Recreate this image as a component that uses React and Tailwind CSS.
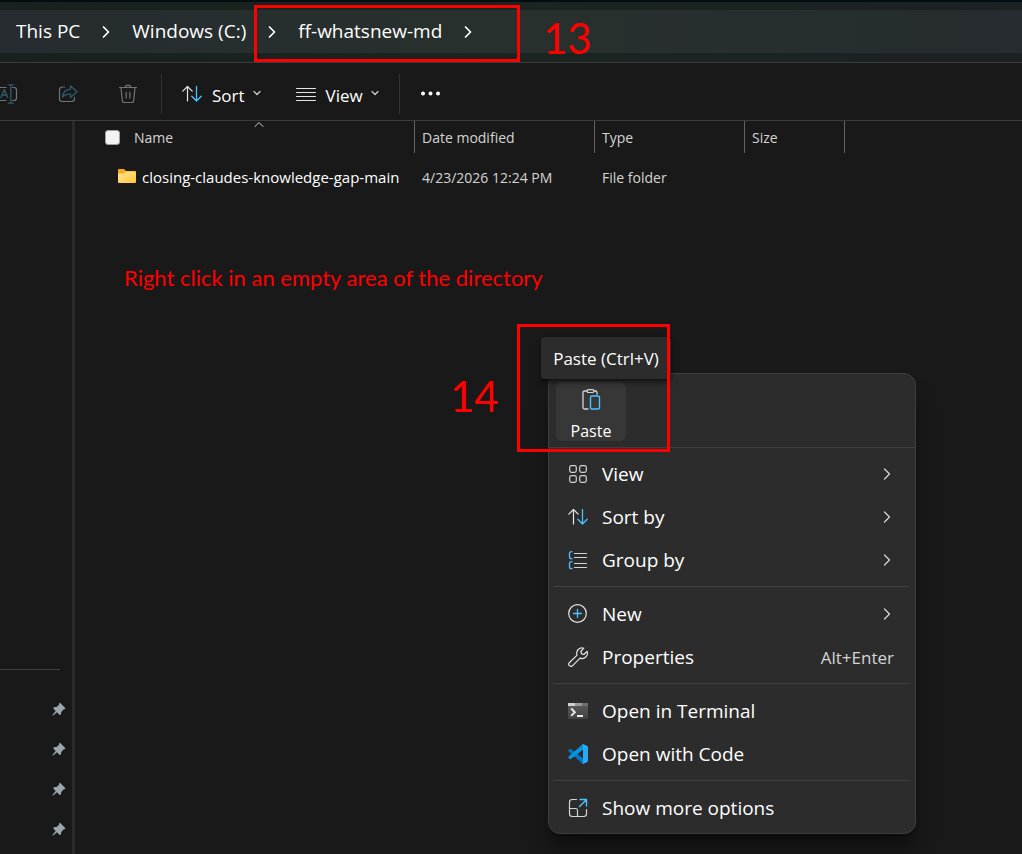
import { Fragment } from 'react';

const BLUE = '#4cc2ff';

function Icon({ size = 20, className = '', children }) {
  return (
    <svg
      width={size}
      height={size}
      viewBox={`0 0 ${size} ${size}`}
      fill="none"
      stroke="currentColor"
      strokeLinecap="round"
      strokeLinejoin="round"
      className={`shrink-0 ${className}`}
      aria-hidden="true"
    >
      {children}
    </svg>
  );
}

function ChevronRight({ className = '', width = 1.3 }) {
  return (
    <Icon size={14} className={className}>
      <path d="M4.500 2 9.500 7l-5 5" strokeWidth={width} />
    </Icon>
  );
}

function ChevronDown() {
  return (
    <Icon size={8} className="-ml-0.5 mb-0.5 text-neutral-300">
      <path d="M1 2.500 4 5.500l3-3" strokeWidth="1.2" />
    </Icon>
  );
}

function SortIcon() {
  return (
    <Icon className="text-neutral-200">
      <path d="M5.500 17V2.500M.8 7.200l4.700-4.700 4.700 4.700" strokeWidth="1.2" />
      <path d="M14.500 2.500V17M9.800 12.300l4.700 4.700 4.700-4.700" stroke={BLUE} strokeWidth="1.3" />
    </Icon>
  );
}

function RenameIcon() {
  return (
    <Icon className="text-neutral-500">
      <path d="M-2 3.500H8M-2 16.500H8M14.500 3.500h1.500a2.500 2.500 0 0 1 2.500 2.500v8a2.500 2.500 0 0 1-2.500 2.500h-1.500" strokeWidth="1.200" />
      <path d="M2.800 13.500 6.300 5.800l3.500 7.700M4 11h4.700" stroke="#315a70" strokeWidth="1.300" />
      <path d="M10.300.8h5M10.300 19.200h5M12.800.8v18.400" stroke="#315a70" strokeWidth="1.300" />
    </Icon>
  );
}

function ShareIcon() {
  return (
    <Icon className="text-neutral-500">
      <path d="M6.500 3H4.200A2.700 2.700 0 0 0 1.500 5.700v9.100a2.700 2.700 0 0 0 2.700 2.700h9.600a2.700 2.700 0 0 0 2.700-2.700v-1.500" strokeWidth="1.200" />
      <path d="M12.500 1.800 19 7.700l-6.500 5.800v-3.300c-4-.2-6.200.8-8 3 .4-4.600 3.200-7.600 8-8Z" stroke="#315a70" strokeWidth="1.300" />
    </Icon>
  );
}

function TrashIcon() {
  return (
    <Icon className="text-neutral-500">
      <path d="M1.500 3.500h17M7.300 3.300a2.700 2.200 0 0 1 5.400 0M3 3.700l1.300 12.700a2.300 2.300 0 0 0 2.300 2.100h6.800a2.300 2.300 0 0 0 2.300-2.100L17 3.700M8.200 8v6M11.800 8v6" strokeWidth="1.200" />
    </Icon>
  );
}

function LinesIcon() {
  return (
    <Icon className="text-neutral-200">
      <path d="M.5 4.500h19M.5 8.500h19M.5 12.500h19M.5 16.500h19" strokeWidth="1" />
    </Icon>
  );
}

function FolderIcon() {
  return (
    <Icon size={18}>
      <defs>
        <linearGradient id="folder" x1="0" y1="0" x2="1" y2="1">
          <stop offset="0" stopColor="#ffe394" />
          <stop offset="1" stopColor="#ffc83d" />
        </linearGradient>
      </defs>
      <path d="M0 2Q0 1 1 1h5l2 2h9q1 0 1 1v3H0Z" fill="#f5ad16" stroke="none" />
      <path d="M0 5.500h6L8 3.500h9q1 0 1 1V14q0 1-1 1H1q-1 0-1-1Z" fill="url(#folder)" stroke="none" />
    </Icon>
  );
}

function PinIcon() {
  return (
    <Icon size={14}>
      <path d="M8 .8 13.200 6v1.100l-1.700.5-2.200 2.300-.4 2.600-1.200.5-2.700-2.700L1.200 13.400l-.7.1.1-.8 3.100-3.800L1.300 6.500l.5-1.200 2.700-.4L7 2.700l.3-1.600Z" fill="#9aa7ae" stroke="none" />
    </Icon>
  );
}

function PasteIcon() {
  return (
    <Icon size={22} className="text-neutral-300">
      <path d="M7 3H4.500Q3 3 3 4.500v15Q3 21 4.500 21H8M14 3h1.500Q17 3 17 4.500V6" strokeWidth="1.300" />
      <rect x="7" y="1.700" width="7" height="2.800" rx="1.400" strokeWidth="1.200" />
      <rect x="10.500" y="8" width="9" height="13" rx="1.500" stroke={BLUE} strokeWidth="1.400" />
    </Icon>
  );
}

function GridIcon() {
  return (
    <Icon className="text-neutral-300">
      <rect x="1.700" y="1.700" width="6.600" height="6.600" rx="1.800" strokeWidth="1.200" />
      <rect x="11.700" y="1.700" width="6.600" height="6.600" rx="1.800" strokeWidth="1.200" />
      <rect x="1.700" y="11.700" width="6.600" height="6.600" rx="1.800" strokeWidth="1.200" />
      <rect x="11.700" y="11.700" width="6.600" height="6.600" rx="1.800" strokeWidth="1.200" />
    </Icon>
  );
}

function GroupIcon() {
  return (
    <Icon className="text-neutral-300">
      <path d="M6.500 3.500h12M6.500 7.500h12M6.500 13.500h12M6.500 17.500h12" strokeWidth="1.200" />
      <path d="M4 1.700h-.5a2 2 0 0 0-2 2v3a2 2 0 0 0 2 2H4M4 11.700h-.5a2 2 0 0 0-2 2v3a2 2 0 0 0 2 2H4" stroke={BLUE} strokeWidth="1.300" />
    </Icon>
  );
}

function NewIcon() {
  return (
    <Icon className="text-neutral-200">
      <circle cx="9.500" cy="9.500" r="8.800" strokeWidth="1.200" />
      <path d="M9.500 5.500v8M5.500 9.500h8" stroke={BLUE} strokeWidth="1.300" />
    </Icon>
  );
}

function WrenchIcon() {
  return (
    <Icon className="text-neutral-200">
      <path d="M15.800 1.200a5.300 5.300 0 0 0-6.700 6.900L1.300 15.700a2.200 2.200 0 0 0 3.100 3.100l7.600-7.700a5.300 5.300 0 0 0 7-6.800l-3.200 3.200-2.200-.6-.8-2.400Z" strokeWidth="1.200" />
    </Icon>
  );
}

function TerminalIcon() {
  return (
    <Icon>
      <defs>
        <linearGradient id="terminal" x1="0" y1="0" x2="0" y2="1">
          <stop offset="0" stopColor="#5c5c5c" />
          <stop offset="1" stopColor="#424242" />
        </linearGradient>
      </defs>
      <path d="M0 2h20v16H0Z" fill="url(#terminal)" stroke="none" />
      <path d="M0 2h7v3H0Z" fill="#cfcfcf" stroke="none" />
      <path d="M7 2h7v3H7Z" fill="#9a9a9a" stroke="none" />
      <path d="M14 2h6v3h-6Z" fill="#707070" stroke="none" />
      <path d="m3.200 7.500 3.600 3.700-3.600 3.700" stroke="#e4e4e4" strokeWidth="2" strokeLinecap="butt" strokeLinejoin="miter" />
      <path d="M9 15h6" stroke="#ffffff" strokeWidth="1.800" strokeLinecap="butt" />
    </Icon>
  );
}

function CodeIcon() {
  return (
    <Icon>
      <path d="m.3 6.200 1.500-1.300q.5-.4 1 0L15 14.300V20L.4 7.200q-.5-.5-.1-1Z" fill="#0078c8" stroke="none" />
      <path d="m.3 13.800 1.500 1.300q.5.400 1 0L15 5.700V0L.4 12.800q-.5.500-.1 1Z" fill="#0a93e0" stroke="none" />
      <path d="M14.200.3q.5-.4 1-.2l4 1.900q.8.400.8 1.200v13.600q0 .800-.8 1.200l-4 1.900q-.5.200-1-.2l.8-.4V.700Z" fill="#2aaaf5" stroke="none" />
    </Icon>
  );
}

function MoreOptionsIcon() {
  return (
    <Icon className="text-neutral-300">
      <path d="M8.500 1.500H4.200a2.700 2.700 0 0 0-2.700 2.700v11.600a2.700 2.700 0 0 0 2.700 2.700h11.600a2.700 2.700 0 0 0 2.700-2.700v-4.300" strokeWidth="1.200" />
      <path d="M1.500 10.500h6a2 2 0 0 1 2 2v6" strokeWidth="1.200" />
      <path d="M12 1.500h6.500V8M18.300 1.700 11.500 8.500" stroke={BLUE} strokeWidth="1.400" />
    </Icon>
  );
}

const menuGroups = [
  [
    { label: 'View', icon: GridIcon, submenu: true },
    { label: 'Sort by', icon: SortIcon, submenu: true },
    { label: 'Group by', icon: GroupIcon, submenu: true },
  ],
  [
    { label: 'New', icon: NewIcon, submenu: true },
    { label: 'Properties', icon: WrenchIcon, shortcut: 'Alt+Enter' },
  ],
  [
    { label: 'Open in Terminal', icon: TerminalIcon },
    { label: 'Open with Code', icon: CodeIcon },
  ],
  [{ label: 'Show more options', icon: MoreOptionsIcon }],
];

function AddressBar() {
  return (
    <header className="border-t-2 border-b border-t-[#020d11] border-b-[#3b3b3b] bg-linear-to-r from-[#19211f] via-[#1b2421] to-[#1c2124] pt-2 pb-[9px]">
      <nav className="flex h-[43px] items-center gap-[19px] bg-linear-to-r from-[#262c2f] via-[#28302d] to-[#262c2f] pl-4 text-[19px]" aria-label="Path">
        {['This PC', 'Windows (C:)', 'ff-whatsnew-md'].map((part) => (
          <Fragment key={part}>
            <a href="#">{part}</a>
            <ChevronRight width={1.7} />
          </Fragment>
        ))}
      </nav>
    </header>
  );
}

function Toolbar() {
  return (
    <div className="flex h-[58px] items-center border-b border-[#3b3b3b] pt-1">
      <div className="-ml-0.5 flex items-center gap-10">
        <button aria-label="Rename"><RenameIcon /></button>
        <button aria-label="Share"><ShareIcon /></button>
        <button aria-label="Delete"><TrashIcon /></button>
      </div>
      <div className="ml-[23px] flex h-10 items-center gap-[35px] border-x border-[#333] px-5">
        <button className="flex items-center gap-2.5">
          <SortIcon />
          <span className="pt-1 text-[17px]">Sort</span>
          <ChevronDown />
        </button>
        <button className="flex items-center gap-2.5">
          <LinesIcon />
          <span className="pt-1 text-[17px]">View</span>
          <ChevronDown />
        </button>
      </div>
      <button className="ml-5" aria-label="See more">
        <Icon size={22}>
          <path d="M3 10.500h.01M10.500 10.500h.01M18 10.500h.01" strokeWidth="4" />
        </Icon>
      </button>
    </div>
  );
}

function Sidebar() {
  return (
    <aside className="w-[75px] shrink-0 border-r-3 border-[#2a2a2a]">
      <div className="mt-[548px] mr-3 border-t border-[#404040]" />
      <ul className="mt-[19px] flex flex-col items-end pr-1.5">
        {[1, 2, 3, 4].map((n) => (
          <li key={n} className="flex h-10 items-center">
            <PinIcon />
          </li>
        ))}
      </ul>
    </aside>
  );
}

function FileTable() {
  return (
    <table className="w-full table-fixed border-separate border-spacing-0 text-left text-[14px]">
      <colgroup>
        <col className="w-[340px]" />
        <col className="w-[180px]" />
        <col className="w-[150px]" />
        <col className="w-[100px]" />
        <col />
      </colgroup>
      <thead className="text-neutral-300">
        <tr className="h-8">
          <th className="relative border-r border-[#636363] p-0 font-normal">
            <Icon size={10} className="absolute top-0 left-1/2 ml-[9px]">
              <path d="m1 5.500 4-4 4 4" strokeWidth="1" />
            </Icon>
            <label className="flex items-center gap-3.5 pl-[30px]">
              <input type="checkbox" className="size-[15px] appearance-none rounded-[3px] border border-neutral-400 bg-[#f3f3f3]" />
              Name
            </label>
          </th>
          <th className="border-r border-[#636363] p-0 pl-[7px] font-normal">Date modified</th>
          <th className="border-r border-[#636363] p-0 pl-[7px] font-normal">Type</th>
          <th className="border-r border-[#636363] p-0 pl-[7px] font-normal">Size</th>
          <th className="p-0" />
        </tr>
      </thead>
      <tbody>
        <tr className="h-12">
          <td className="p-0">
            <a href="#" className="flex items-center gap-1.5 pl-[43px] text-[15px]">
              <FolderIcon />
              closing-claudes-knowledge-gap-main
            </a>
          </td>
          <td className="p-0 pl-[7px] text-neutral-300">4/23/2026 12:24 PM</td>
          <td className="p-0 pl-[7px] text-neutral-300">File folder</td>
          <td className="p-0" />
          <td className="p-0" />
        </tr>
      </tbody>
    </table>
  );
}

function ContextMenu() {
  return (
    <div className="absolute top-[373px] left-[548px] w-[368px] rounded-xl border border-[#3e3e3e] bg-[#2c2c2c] shadow-xl shadow-black/40">
      <div className="border-b border-[#3e3e3e] px-[7px] pt-2 pb-1.5">
        <button className="flex h-[59px] w-[70px] flex-col items-center justify-between rounded-md bg-[#373737] pt-1.5 text-[16px] leading-5">
          <PasteIcon />
          Paste
        </button>
      </div>
      <div className="py-1 pr-1.5 pl-1">
        {menuGroups.map((group, i) => (
          <div key={group[0].label}>
            {i > 0 && <hr className="my-[5px] border-[#404040]" />}
            {group.map(({ label, icon: ItemIcon, submenu, shortcut }) => (
              <button key={label} className="flex h-[43px] w-full items-center gap-3.5 pr-[15px] pl-[15px] text-left text-[19px]">
                <ItemIcon />
                <span className="flex-1 pt-0.5">{label}</span>
                {submenu && <ChevronRight className="text-neutral-300" />}
                {shortcut && <span className="pt-0.5 text-[17px] text-neutral-300">{shortcut}</span>}
              </button>
            ))}
          </div>
        ))}
      </div>
    </div>
  );
}

export default function App() {
  return (
    <div className="relative flex min-h-screen flex-col overflow-hidden bg-[#191919] font-['Open_Sans',sans-serif] text-white">
      <AddressBar />
      <Toolbar />
      <main className="flex flex-1">
        <Sidebar />
        <section className="min-w-0 flex-1">
          <FileTable />
          <p className="mt-[63px] ml-[49px] font-[Lato,sans-serif] text-[22px] leading-7 text-[#f00]">
            Right click in an empty area of the directory
          </p>
        </section>
      </main>

      <ContextMenu />
      <div role="tooltip" className="absolute top-[337px] left-[541px] flex h-[42px] w-[130px] items-center justify-center rounded bg-[#2c2c2c] pt-0.5 text-[17px] whitespace-nowrap shadow-md shadow-black/50">
        Paste (Ctrl+V)
      </div>

      <div className="pointer-events-none absolute top-[5px] left-[254px] h-[57px] w-[266px] border-3 border-[#f00]" />
      <span className="absolute top-[12px] left-[543px] font-[Lato,sans-serif] text-[42px] leading-[52px] text-[#f00]">13</span>
      <div className="pointer-events-none absolute top-[324px] left-[517px] h-[128px] w-[153px] border-3 border-[#f00]" />
      <span className="absolute top-[370px] left-[450px] font-[Lato,sans-serif] text-[42px] leading-[52px] text-[#f00]">14</span>
    </div>
  );
}
